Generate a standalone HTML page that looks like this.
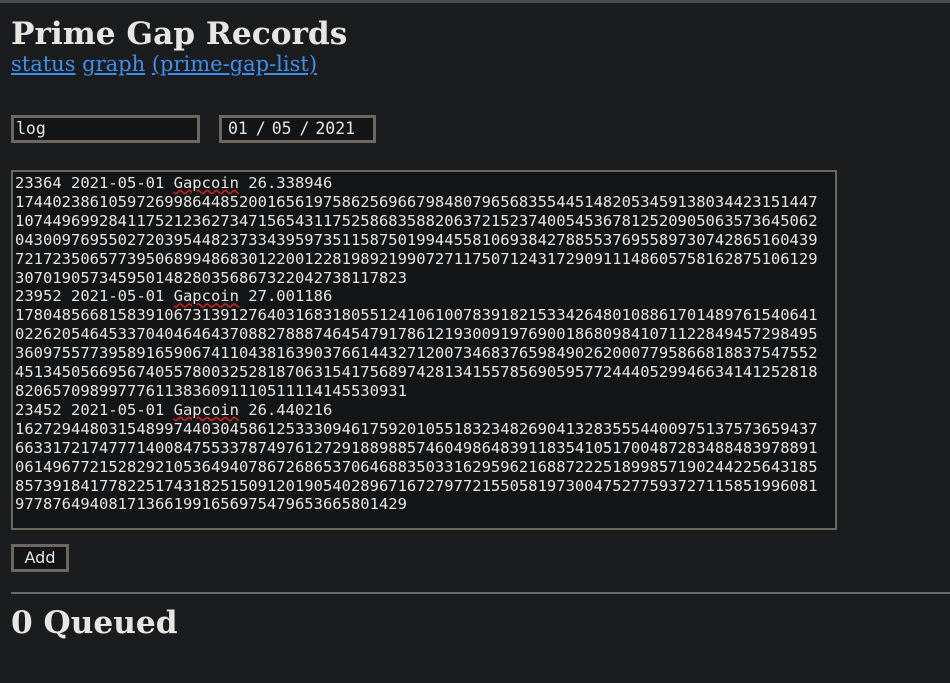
<!DOCTYPE html>
<html><head><style>
html,body{margin:0;padding:0;background:#1b1c1e;width:950px;height:683px;overflow:hidden;}
body{position:relative;color:#e8e6e3;}
.bar{position:absolute;left:0;top:0;width:950px;height:3px;background:#4a4a4a}
.t{position:absolute;font-family:"DejaVu Serif","Liberation Serif",serif;font-weight:bold;color:#e8e6e3;margin:0;white-space:nowrap}
.links{position:absolute;left:11px;top:52px;font-family:"DejaVu Serif",serif;font-size:21px;}
.links a{color:#3d8ff0;text-decoration:underline;}
.inp{position:absolute;box-sizing:border-box;border:3px solid #6d685f;background:#131416;color:#e8e6e3;font-family:"DejaVu Sans Mono",monospace;font-size:16.5px;padding:1px 2px;line-height:20px}
.ta{position:absolute;left:11px;top:170px;width:826px;height:360px;box-sizing:border-box;border:2px solid #6d685f;background:#141517;font-family:"DejaVu Sans Mono",monospace;font-size:15.5px;line-height:18.9px;padding:2px 2px;white-space:pre;color:#e8e6e3;overflow:hidden}
u{text-decoration:underline wavy #d02020;}
</style></head><body>
<div class="bar"></div>
<div class="t" style="left:11px;top:16px;font-size:31.2px">Prime Gap Records</div>
<div class="links"><a>status</a> <a>graph</a> <a>(prime-gap-list)</a></div>
<div class="inp" style="left:11px;top:115px;width:189px;height:28px">log</div>
<div class="inp" style="left:219px;top:115px;width:157px;height:28px;padding-left:6px">01<span style="letter-spacing:-2px"> / </span>05<span style="letter-spacing:-2px"> / </span>2021</div>
<div class="ta">23364 2021-05-01 <u>Gapcoin</u> 26.338946
1744023861059726998644852001656197586256966798480796568355445148205345913803442315144​7
1074496992841175212362734715654311752586835882063721523740054536781252090506357364506​2
0430097695502720395448237334395973511587501994455810693842788553769558973074286516043​9
7217235065773950689948683012200122819892199072711750712431729091114860575816287510612​9
30701905734595014828035686732204273811782​3
23952 2021-05-01 <u>Gapcoin</u> 27.001186
1780485668158391067313912764031683180551241061007839182153342648010886170148976154064​1
0226205464533704046464370882788874645479178612193009197690018680984107112284945729849​5
3609755773958916590674110438163903766144327120073468376598490262000779586681883754755​2
4513450566956740557800325281870631541756897428134155785690595772444052994663414125281​8
82065709899777611383609111051111414553093​1
23452 2021-05-01 <u>Gapcoin</u> 26.440216
1627294480315489974403045861253330946175920105518323482690413283555440097513757365943​7
6633172174777140084755337874976127291889885746049864839118354105170048728348848397889​1
0614967721528292105364940786726865370646883503316295962168872225189985719024422564318​5
8573918417782251743182515091201905402896716727977215505819730047527759372711585199608​1
97787649408171366199165697547965366580142​9</div>
<div class="inp" style="left:11px;top:544px;width:58px;height:28px;font-family:'DejaVu Sans',sans-serif;font-size:16px;text-align:center;padding:1px 0">Add</div>
<div style="position:absolute;left:11px;top:592px;width:939px;height:2px;background:#6a6a6a"></div>
<div class="t" style="left:11px;top:605px;font-size:31.2px">0 Queued</div>
</body></html>
